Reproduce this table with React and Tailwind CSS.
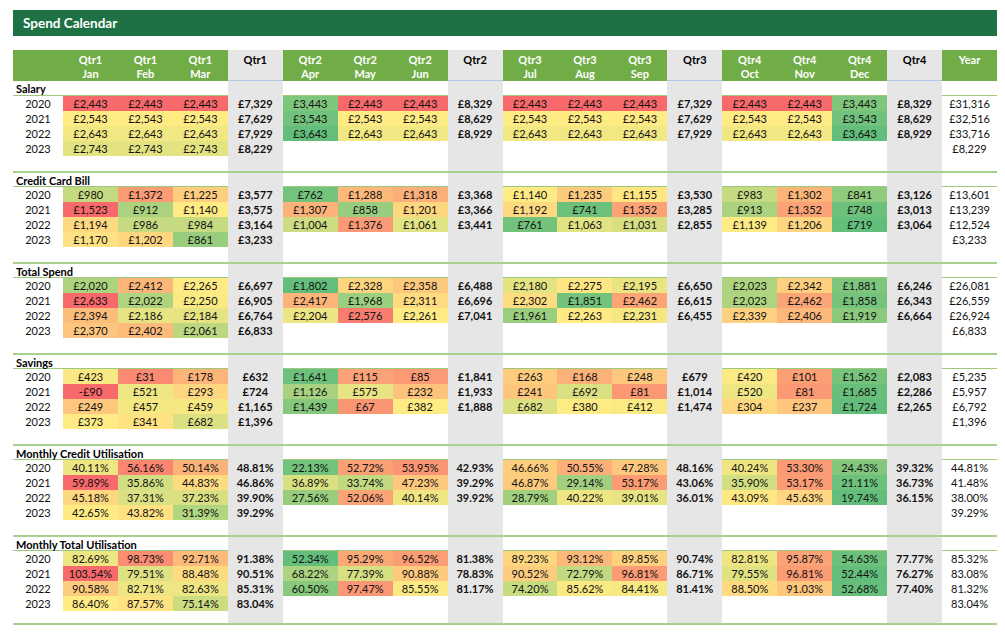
import React from "react";

const RED = [0xf8, 0x69, 0x6b];
const YEL = [0xff, 0xeb, 0x84];
const GRN = [0x63, 0xbe, 0x7b];

const SECTIONS = [
  {
    name: "Salary",
    type: "cur",
    hi: true,
    rows: [
      { y: 2020, m: [2443, 2443, 2443, 3443, 2443, 2443, 2443, 2443, 2443, 2443, 2443, 3443], q: ["£7,329", "£8,329", "£7,329", "£8,329"], t: "£31,316" },
      { y: 2021, m: [2543, 2543, 2543, 3543, 2543, 2543, 2543, 2543, 2543, 2543, 2543, 3543], q: ["£7,629", "£8,629", "£7,629", "£8,629"], t: "£32,516" },
      { y: 2022, m: [2643, 2643, 2643, 3643, 2643, 2643, 2643, 2643, 2643, 2643, 2643, 3643], q: ["£7,929", "£8,929", "£7,929", "£8,929"], t: "£33,716" },
      { y: 2023, m: [2743, 2743, 2743], q: ["£8,229"], t: "£8,229" },
    ],
  },
  {
    name: "Credit Card Bill",
    type: "cur",
    hi: false,
    rows: [
      { y: 2020, m: [980, 1372, 1225, 762, 1288, 1318, 1140, 1235, 1155, 983, 1302, 841], q: ["£3,577", "£3,368", "£3,530", "£3,126"], t: "£13,601" },
      { y: 2021, m: [1523, 912, 1140, 1307, 858, 1201, 1192, 741, 1352, 913, 1352, 748], q: ["£3,575", "£3,366", "£3,285", "£3,013"], t: "£13,239" },
      { y: 2022, m: [1194, 986, 984, 1004, 1376, 1061, 761, 1063, 1031, 1139, 1206, 719], q: ["£3,164", "£3,441", "£2,855", "£3,064"], t: "£12,524" },
      { y: 2023, m: [1170, 1202, 861], q: ["£3,233"], t: "£3,233" },
    ],
  },
  {
    name: "Total Spend",
    type: "cur",
    hi: false,
    rows: [
      { y: 2020, m: [2020, 2412, 2265, 1802, 2328, 2358, 2180, 2275, 2195, 2023, 2342, 1881], q: ["£6,697", "£6,488", "£6,650", "£6,246"], t: "£26,081" },
      { y: 2021, m: [2633, 2022, 2250, 2417, 1968, 2311, 2302, 1851, 2462, 2023, 2462, 1858], q: ["£6,905", "£6,696", "£6,615", "£6,343"], t: "£26,559" },
      { y: 2022, m: [2394, 2186, 2184, 2204, 2576, 2261, 1961, 2263, 2231, 2339, 2406, 1919], q: ["£6,764", "£7,041", "£6,455", "£6,664"], t: "£26,924" },
      { y: 2023, m: [2370, 2402, 2061], q: ["£6,833"], t: "£6,833" },
    ],
  },
  {
    name: "Savings",
    type: "cur",
    hi: true,
    rows: [
      { y: 2020, m: [423, 31, 178, 1641, 115, 85, 263, 168, 248, 420, 101, 1562], q: ["£632", "£1,841", "£679", "£2,083"], t: "£5,235" },
      { y: 2021, m: [-90, 521, 293, 1126, 575, 232, 241, 692, 81, 520, 81, 1685], q: ["£724", "£1,933", "£1,014", "£2,286"], t: "£5,957" },
      { y: 2022, m: [249, 457, 459, 1439, 67, 382, 682, 380, 412, 304, 237, 1724], q: ["£1,165", "£1,888", "£1,474", "£2,265"], t: "£6,792" },
      { y: 2023, m: [373, 341, 682], q: ["£1,396"], t: "£1,396" },
    ],
  },
  {
    name: "Monthly Credit Utilisation",
    type: "pct",
    hi: false,
    rows: [
      { y: 2020, m: [40.11, 56.16, 50.14, 22.13, 52.72, 53.95, 46.66, 50.55, 47.28, 40.24, 53.3, 24.43], q: ["48.81%", "42.93%", "48.16%", "39.32%"], t: "44.81%" },
      { y: 2021, m: [59.89, 35.86, 44.83, 36.89, 33.74, 47.23, 46.87, 29.14, 53.17, 35.9, 53.17, 21.11], q: ["46.86%", "39.29%", "43.06%", "36.73%"], t: "41.48%" },
      { y: 2022, m: [45.18, 37.31, 37.23, 27.56, 52.06, 40.14, 28.79, 40.22, 39.01, 43.09, 45.63, 19.74], q: ["39.90%", "39.92%", "36.01%", "36.15%"], t: "38.00%" },
      { y: 2023, m: [42.65, 43.82, 31.39], q: ["39.29%"], t: "39.29%" },
    ],
  },
  {
    name: "Monthly Total Utilisation",
    type: "pct",
    hi: false,
    rows: [
      { y: 2020, m: [82.69, 98.73, 92.71, 52.34, 95.29, 96.52, 89.23, 93.12, 89.85, 82.81, 95.87, 54.63], q: ["91.38%", "81.38%", "90.74%", "77.77%"], t: "85.32%" },
      { y: 2021, m: [103.54, 79.51, 88.48, 68.22, 77.39, 90.88, 90.52, 72.79, 96.81, 79.55, 96.81, 52.44], q: ["90.51%", "78.83%", "86.71%", "76.27%"], t: "83.08%" },
      { y: 2022, m: [90.58, 82.71, 82.63, 60.5, 97.47, 85.55, 74.2, 85.62, 84.41, 88.5, 91.03, 52.68], q: ["85.31%", "81.17%", "81.41%", "77.40%"], t: "81.32%" },
      { y: 2023, m: [86.4, 87.57, 75.14], q: ["83.04%"], t: "83.04%" },
    ],
  },
];

const MONTHS = [
  ["Qtr1", "Jan"], ["Qtr1", "Feb"], ["Qtr1", "Mar"],
  ["Qtr2", "Apr"], ["Qtr2", "May"], ["Qtr2", "Jun"],
  ["Qtr3", "Jul"], ["Qtr3", "Aug"], ["Qtr3", "Sep"],
  ["Qtr4", "Oct"], ["Qtr4", "Nov"], ["Qtr4", "Dec"],
];

function fmt(v, type) {
  if (type === "pct") return v.toFixed(2) + "%";
  const s = String(Math.abs(v)).replace(/\B(?=(\d{3})+(?!\d))/g, ",");
  return (v < 0 ? "-£" : "£") + s;
}

function lerp(a, b, t) {
  t = Math.max(0, Math.min(1, t));
  return [0, 1, 2].map((i) => Math.round(a[i] + (b[i] - a[i]) * t));
}

function makeScale(sec) {
  const vals = [];
  sec.rows.forEach((r) => r.m.forEach((v) => vals.push(v)));
  vals.sort((a, b) => a - b);
  const n = vals.length;
  const pos = 0.5 * (n - 1);
  const lo = Math.floor(pos);
  const mid = vals[lo] + (vals[Math.min(lo + 1, n - 1)] - vals[lo]) * (pos - lo);
  const min = vals[0];
  const max = vals[n - 1];
  const lowC = sec.hi ? RED : GRN;
  const highC = sec.hi ? GRN : RED;
  return (v) => {
    let c;
    if (v <= mid) c = lerp(lowC, YEL, mid === min ? 1 : (v - min) / (mid - min));
    else c = lerp(YEL, highC, max === mid ? 0 : (v - mid) / (max - mid));
    return `rgb(${c[0]},${c[1]},${c[2]})`;
  };
}

const GRID = "grid grid-cols-[50px_repeat(17,minmax(0,1fr))]";

function BlankCells() {
  const cells = [];
  for (let i = 0; i < 17; i++) {
    const grey = i % 4 === 3 && i < 16;
    cells.push(<div key={i} className={grey ? "bg-[#e7e6e6]" : ""} />);
  }
  return cells;
}

function Section({ sec, first, last }) {
  const scale = makeScale(sec);
  return (
    <div className={first ? "" : "border-t-2 border-[#a9d08e]"}>
      <div className={`${GRID} ${first ? "h-[15px]" : "h-[14px]"} border-b border-[#9cc97d] text-[11px] leading-[15px]`}>
        <div className="whitespace-nowrap pl-[3px] font-bold text-black">{sec.name}</div>
        <BlankCells />
      </div>
      {sec.rows.map((r) => {
        const cells = [];
        for (let qi = 0; qi < 4; qi++) {
          for (let mi = 0; mi < 3; mi++) {
            const idx = qi * 3 + mi;
            const v = r.m[idx];
            cells.push(
              <div
                key={`m${idx}`}
                className="text-center"
                style={v !== undefined ? { backgroundColor: scale(v) } : undefined}
              >
                {v !== undefined ? fmt(v, sec.type) : ""}
              </div>
            );
          }
          cells.push(
            <div key={`q${qi}`} className="bg-[#e7e6e6] text-center font-bold">
              {r.q[qi] || ""}
            </div>
          );
        }
        return (
          <div key={r.y} className={`${GRID} h-[15px] text-[11px] leading-[15px] text-[#111]`}>
            <div className="text-center">{r.y}</div>
            {cells}
            <div className="text-center">{r.t}</div>
          </div>
        );
      })}
      <div className={`${GRID} ${last ? "h-[14px] border-b-2 border-[#a9d08e]" : "h-[15px]"}`}>
        <div />
        <BlankCells />
      </div>
    </div>
  );
}

export default function App() {
  const header = [];
  header.push(<div key="lbl" className="bg-[#70ad47]" />);
  for (let qi = 0; qi < 4; qi++) {
    for (let mi = 0; mi < 3; mi++) {
      const [q, m] = MONTHS[qi * 3 + mi];
      header.push(
        <div key={`h${qi}${mi}`} className="bg-[#70ad47] pt-[3px] text-center font-bold leading-[14px] text-white">
          <div>{q}</div>
          <div>{m}</div>
        </div>
      );
    }
    header.push(
      <div key={`hq${qi}`} className="border-b border-[#b4c6e7] bg-[#e7e6e6] pt-[3px] text-center font-bold leading-[14px] text-black">
        {`Qtr${qi + 1}`}
      </div>
    );
  }
  header.push(
    <div key="year" className="bg-[#70ad47] pt-[3px] text-center font-bold leading-[14px] text-white">
      Year
    </div>
  );

  return (
    <div
      className="h-[643px] w-[1005px] overflow-hidden bg-white pl-[13px] pt-[10px]"
      style={{ fontFamily: "Lato, 'Noto Sans', sans-serif" }}
    >
      <div className="flex h-[26px] w-[984px] items-center bg-[#1e7145] pl-[10px] text-[13.5px] font-bold text-white">
        Spend Calendar
      </div>
      <div className="mt-[14px] w-[984px]">
        <div className={`${GRID} h-[31px] text-[11px]`}>{header}</div>
        {SECTIONS.map((sec, i) => (
          <Section key={sec.name} sec={sec} first={i === 0} last={i === SECTIONS.length - 1} />
        ))}
      </div>
    </div>
  );
}
